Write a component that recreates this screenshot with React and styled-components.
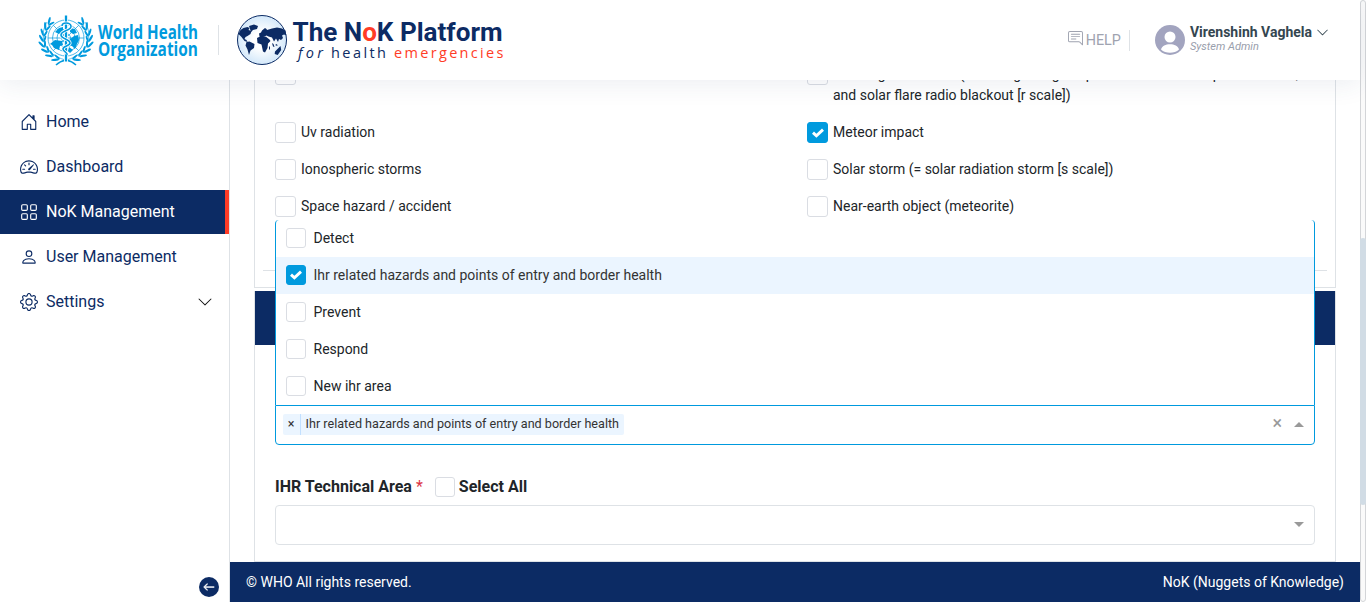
import React from "react";
import styled, { createGlobalStyle, css } from "styled-components";
import {
  BsHouseDoor,
  BsSpeedometer2,
  BsGrid,
  BsPerson,
  BsGear,
  BsChevronDown,
  BsChatRightText,
  BsArrowLeft,
} from "react-icons/bs";

const navy = "#0c2b64";
const blue = "#009ade";
const line = "#dee2e6";

const GlobalStyle = createGlobalStyle`
  * { box-sizing: border-box; }
  body {
    margin: 0;
    overflow: hidden;
    background: #fff;
    color: #212529;
    font: 14px/21px Roboto, "Liberation Sans", sans-serif;
  }
`;

const Page = styled.div`
  display: flex;
  height: 602px;
`;

const Shell = styled.div`
  flex: 1;
  min-width: 0;
  display: flex;
  flex-direction: column;
`;

const ScrollTrack = styled.div`
  width: 6px;
  border: 1px solid #d3d5d8;
  border-radius: 4px;
  background: #fafafa;
  padding-top: 237px;
`;

const ScrollThumb = styled.div`
  height: 267px;
  margin: 0 -1px;
  border-radius: 3px;
  background: #d1dce5;
`;

const Header = styled.header`
  position: relative;
  z-index: 5;
  flex: none;
  display: flex;
  align-items: center;
  justify-content: space-between;
  height: 80px;
  padding: 0 31px 0 38px;
  background: #fff;
  box-shadow: 0 4px 24px rgba(40, 70, 110, 0.09);
`;

const Brand = styled.div`
  display: flex;
  align-items: center;
  svg { overflow: visible; }
`;

const Divider = styled.span`
  width: 1px;
  height: ${(p) => p.$h}px;
  margin: 0 ${(p) => p.$gap ?? 0}px;
  background: ${line};
`;

const Account = styled.div`
  display: flex;
  align-items: center;
  height: 30px;
`;

const Help = styled.div`
  display: flex;
  align-items: center;
  gap: 3px;
  margin-right: 8px;
  color: #9fa3b0;
  font-size: 14.4px;
  svg { margin-bottom: 3px; }
`;

const User = styled.div`
  display: flex;
  align-items: center;
  margin-left: 25px;
`;

const UserText = styled.div`
  margin: 0 4px 2px 5px;
  strong {
    display: block;
    color: #344650;
    font-size: 14px;
    line-height: 15px;
    font-weight: 700;
  }
  em {
    display: block;
    color: #999eac;
    font-size: 11px;
    line-height: 13px;
  }
`;

const UserChevron = styled(BsChevronDown)`
  color: #344650;
  margin-bottom: 16px;
`;

const Body = styled.div`
  flex: 1;
  min-height: 0;
  display: flex;
`;

const Sidebar = styled.aside`
  width: 230px;
  flex: none;
  display: flex;
  flex-direction: column;
  padding-top: 20px;
  border-right: 1px solid ${line};
`;

const NavItem = styled.a`
  display: flex;
  align-items: center;
  gap: 8px;
  height: 44px;
  margin-bottom: 1px;
  padding: 0 16px 0 20px;
  color: ${navy};
  font-size: 16px;
  span { flex: 1; padding-bottom: 1px; }
  ${(p) =>
    p.$active &&
    css`
      background: ${navy};
      color: #fff;
      border-right: 4px solid #ff3c26;
    `}
`;

const Collapse = styled.button`
  display: flex;
  align-items: center;
  justify-content: center;
  width: 20px;
  height: 20px;
  margin: auto 10px 5px auto;
  padding: 0;
  border: 0;
  border-radius: 50%;
  background: ${navy};
  color: #fff;
`;

const Main = styled.main`
  flex: 1;
  min-width: 0;
  display: flex;
  flex-direction: column;
  overflow: hidden;
`;

const Cards = styled.div`
  flex: 1;
  min-height: 0;
  padding: 0 24px;
  overflow: hidden;
`;

const HazardCard = styled.section`
  height: 224px;
  margin: -16px 0 3px;
  padding: 0 8px;
  border: solid ${line};
  border-width: 0 1px 1px;
`;

const HazardGrid = styled.div`
  display: grid;
  grid-template-columns: 532px 1fr;
  row-gap: 16px;
  height: 207px;
  align-content: start;
  padding: 0 6px 0 12px;
  border-bottom: 1px solid ${line};
`;

const Check = styled.label`
  display: flex;
  align-items: flex-start;
  gap: 5px;
`;

const Box = styled.span`
  flex: none;
  display: flex;
  align-items: center;
  justify-content: center;
  width: ${(p) => p.$size}px;
  height: ${(p) => p.$size}px;
  border: 1px solid ${(p) => (p.$on ? blue : "#dadde3")};
  border-radius: 3px;
  background: ${(p) => (p.$on ? blue : "#fff")};
`;

const AreaCard = styled.section`
  height: 271px;
  border: 1px solid ${line};
  border-top: 0;
`;

const CardBar = styled.div`
  height: 54px;
  background: ${navy};
`;

const Fields = styled.div`
  padding: 60px 20px 0;
`;

const SelectBox = styled.div`
  position: relative;
  display: flex;
  align-items: center;
  height: 40px;
  padding: 0 11px 1px 7px;
  border: 1px solid ${(p) => (p.$open ? blue : line)};
  border-radius: ${(p) => (p.$open ? "0 0 4px 4px" : "4px")};
  background: #fff;
`;

const Menu = styled.div`
  position: absolute;
  left: -1px;
  right: -1px;
  bottom: calc(100% + 1px);
  border: solid ${blue};
  border-width: 0 1px;
  border-radius: 4px 4px 0 0;
  background: #fff;
`;

const Option = styled.div`
  display: flex;
  align-items: center;
  gap: 7.5px;
  height: 37px;
  padding: 0 10px 1px;
  background: ${(p) => (p.$on ? "#ebf5ff" : "transparent")};
  color: ${(p) => (p.$on ? "#333" : "#212529")};
`;

const Tag = styled.div`
  display: flex;
  height: 21px;
  border-radius: 2px;
  background: #ebf5ff;
  color: #333;
  font-size: 12.6px;
  line-height: 20px;
`;

const TagRemove = styled.span`
  width: 18px;
  padding-right: 1px;
  text-align: center;
  border-right: 1px solid #c2e0ff;
`;

const TagLabel = styled.span`
  padding: 0 5px 0 4.6px;
`;

const Clear = styled.span`
  margin-left: auto;
  padding-bottom: 4px;
  color: #999;
  font-size: 18px;
`;

const Caret = styled.span`
  margin-left: ${(p) => (p.$up ? "12px" : "auto")};
  margin-right: -1px;
  border: 5px solid transparent;
  ${(p) =>
    p.$up
      ? css`border-top: 0; border-bottom-color: #999;`
      : css`border-bottom: 0; border-top-color: #999;`}
`;

const FieldLabel = styled.div`
  display: flex;
  align-items: center;
  height: 24px;
  margin: 29px 0 7px;
  font-size: 16px;
  font-weight: 700;
  i {
    margin: 0 12px 0 4px;
    color: #dc3545;
    font-style: normal;
    font-weight: 400;
  }
  b {
    margin-left: 4px;
    font-weight: 700;
  }
  ${Box} { margin-top: 2px; }
`;

const Footer = styled.footer`
  flex: none;
  display: flex;
  align-items: center;
  justify-content: space-between;
  height: 40px;
  padding: 0 16px;
  background: ${navy};
  color: #fff;
`;

const Tick = () => (
  <svg width="12" height="10" viewBox="0 0 12 10">
    <path d="M1 4.600 4.400 7.800 11 1.600" fill="none" stroke="#fff" strokeWidth="2.900" />
  </svg>
);

const Checkbox = ({ on, size = 21 }) => (
  <Box $on={on} $size={size}>{on && <Tick />}</Box>
);

const leaves = [
  [17, 46, 70], [11, 42, 55], [7, 37, 38], [4, 31, 20], [4, 25, 5],
  [5, 19, -8], [8, 13, -22], [12, 8, -38],
];

const Laurel = () => (
  <g fill={blue}>
    {leaves.map(([x, y, a], i) => (
      <g key={i} transform={`translate(${x} ${y})`}>
        <ellipse cx="-.8" rx="1.1" ry="4" transform={`rotate(${-a - 25})`} />
        <ellipse cx="3" cy="0.2" rx="1" ry="3.500" transform={`rotate(${-a + 22})`} />
      </g>
    ))}
    <path d="M9 9C1 22 5 41 27.500 47" fill="none" stroke={blue} strokeWidth=".6" />
  </g>
);

const WhoLogo = () => (
  <svg width="162" height="54" viewBox="0 0 162 54">
    <g fill="none" stroke={blue} strokeWidth=".7">
      <circle cx="28" cy="25" r="18" />
      <circle cx="28" cy="25" r="13.500" />
      <circle cx="28" cy="25" r="9" />
      <circle cx="28" cy="25" r="4.500" />
      <path d="M10 25h36M15.300 12.300l25.400 25.400M40.700 12.300 15.300 37.700" />
    </g>
    <g fill={blue}>
      <path d="m12 31 5-4 7 1 1 4-3 1-1 4-5-2-2-3zM31 27l5-4 4-1 1 5-2 4-2 5-3-3-4-1zM21 15l4-1v4l-4 3-4-2zM32 15l5 1 2 4-4 1-3-2zM31 34l4 3-3 3-2-2z" />
    </g>
    <Laurel />
    <g transform="translate(56 0) scale(-1 1)"><Laurel /></g>
    <path d="M28 47c-5 1-7 2-10 5M28 47c5 1 7 2 10 5" fill="none" stroke={blue} strokeWidth="1.500" />
    <path d="M28 3v46" stroke="#fff" strokeWidth="4" />
    <path d="M28 2.500v46" stroke={blue} strokeWidth="2.300" />
    <path
      d="M24 13c0-4 8-4 9 0 1 5-10 4-10 9 0 4 9 4 9 8 0 3-7 3-7 6s5 3 4 6"
      fill="none" stroke="#fff" strokeWidth="3.200"
    />
    <path
      d="M24 13c0-4 8-4 9 0 1 5-10 4-10 9 0 4 9 4 9 8 0 3-7 3-7 6s5 3 4 6"
      fill="none" stroke={blue} strokeWidth="1.600"
    />
    <g fill={blue} fontFamily="Open Sans, Noto Sans, sans-serif" fontSize="19" fontWeight="700">
      <text x="60" y="26" textLength="100" lengthAdjust="spacingAndGlyphs">World Health</text>
      <text x="60" y="43" textLength="100" lengthAdjust="spacingAndGlyphs">Organization</text>
    </g>
  </svg>
);

const NokLogo = () => (
  <svg width="270" height="54" viewBox="0 0 270 54">
    <defs>
      <radialGradient id="sea">
        <stop offset="0.350" stopColor="#fff" />
        <stop offset="1" stopColor="#d3e8fa" />
      </radialGradient>
    </defs>
    <circle cx="26" cy="27" r="24.500" fill="url(#sea)" stroke={navy} strokeWidth="1" />
    <g fill={navy}>
      <path d="m2.500 21 2-4 3-2 4-1 2 1-1 2 3 1-1 3-3 2-2 1-1 2 2 1 1 2-3-1-3-4z" />
      <path d="m13 13 5-1.500 4 1.500-1 3-4 1-2 2-1-3z" />
      <path d="m10.500 29 3-.5 5 2.500-.5 4-3.500 2.500-1.500 4.500-1.500-5.500-2-4z" />
      <path d="m23 20.500 2-1 1-2 3-2.500 1.500 1 .5 1 5-1.500 5-1 5 1 3.500 2 .8 5-2.300-1-2 1 1 2.500-2 2-2-1-1 3-2-3.500-2 3-2-4-3.500-1-2-1-2 1-3 1-2-1z" />
      <path d="m21 25 4-2 5 .7 3.500 2.800 1 1.500-2.500 2.500-.5 4.500-2.500 4.500-2-1-1.500-7-4-1.500zM39 38.500l3-3 2.500-2.500.7 4-3.500 5-3-1zM36 30l1.500 1 1 3-1.500-.500zM39 32l2-1 .5 2zM33 34l1-1v3l-1 1z" />
    </g>
    <g fontFamily="Roboto, sans-serif" fontSize="26" fontWeight="700" fill={navy}>
      <text x="56.500" y="28" textLength="210" lengthAdjust="spacingAndGlyphs">
        The N<tspan fill="#ff3c26">o</tspan>K Platform
      </text>
    </g>
    <g fontFamily="Open Sans, Noto Sans, sans-serif" fontSize="14.500" fill={navy}>
      <text x="62" y="45" fontStyle="italic" textLength="25">for</text>
      <text x="95" y="45" textLength="55">health</text>
      <text x="158" y="45" fill="#ff3c26" textLength="109.500">emergencies</text>
    </g>
  </svg>
);

const Avatar = () => (
  <svg width="30" height="30" viewBox="0 0 30 30">
    <circle cx="15" cy="15" r="15" fill="#a2a4bf" />
    <circle cx="15" cy="12" r="5.500" fill="#fff" />
    <path d="M6 24.500c1.500-7 16.500-7 18 0-4.500 4.300-13.500 4.300-18 0z" fill="#fff" />
  </svg>
);

const nav = [
  ["Home", BsHouseDoor],
  ["Dashboard", BsSpeedometer2],
  ["NoK Management", BsGrid],
  ["User Management", BsPerson],
  ["Settings", BsGear],
];

const hazards = [
  ["Airburst"],
  ["Geomagnetic storm (including energetic particles related to space weather, and solar flare radio blackout [r scale])"],
  ["Uv radiation"],
  ["Meteor impact", true],
  ["Ionospheric storms"],
  ["Solar storm (= solar radiation storm [s scale])"],
  ["Space hazard / accident"],
  ["Near-earth object (meteorite)"],
];

const selected = "Ihr related hazards and points of entry and border health";
const areas = ["Detect", selected, "Prevent", "Respond", "New ihr area"];

export default function App() {
  return (
    <Page>
      <GlobalStyle />
      <Shell>
        <Header>
          <Brand>
            <WhoLogo />
            <Divider $h={30} $gap={17.5} />
            <NokLogo />
          </Brand>
          <Account>
            <Help><BsChatRightText size={15} />HELP</Help>
            <Divider $h={21} />
            <User>
              <Avatar />
              <UserText>
                <strong>Virenshinh Vaghela</strong>
                <em>System Admin</em>
              </UserText>
              <UserChevron size={13} />
            </User>
          </Account>
        </Header>
        <Body>
          <Sidebar>
            {nav.map(([name, Icon]) => (
              <NavItem key={name} $active={name === "NoK Management"}>
                <Icon size={18} />
                <span>{name}</span>
                {name === "Settings" && <BsChevronDown size={16} color="#111" />}
              </NavItem>
            ))}
            <Collapse aria-label="Collapse"><BsArrowLeft size={12} strokeWidth={0.8} /></Collapse>
          </Sidebar>
          <Main>
            <Cards>
              <HazardCard>
                <HazardGrid>
                  {hazards.map(([name, on]) => (
                    <Check key={name}><Checkbox on={on} />{name}</Check>
                  ))}
                </HazardGrid>
              </HazardCard>
              <AreaCard>
                <CardBar />
                <Fields>
                  <SelectBox $open>
                    <Menu>
                      {areas.map((name) => (
                        <Option key={name} $on={name === selected}>
                          <Checkbox on={name === selected} size={20} />
                          {name}
                        </Option>
                      ))}
                    </Menu>
                    <Tag>
                      <TagRemove>×</TagRemove>
                      <TagLabel>{selected}</TagLabel>
                    </Tag>
                    <Clear>×</Clear>
                    <Caret $up />
                  </SelectBox>
                  <FieldLabel>
                    IHR Technical Area<i>*</i>
                    <Checkbox size={20} />
                    <b>Select All</b>
                  </FieldLabel>
                  <SelectBox><Caret /></SelectBox>
                </Fields>
              </AreaCard>
            </Cards>
            <Footer>
              <span>© WHO All rights reserved.</span>
              <span>NoK (Nuggets of Knowledge)</span>
            </Footer>
          </Main>
        </Body>
      </Shell>
      <ScrollTrack><ScrollThumb /></ScrollTrack>
    </Page>
  );
}
